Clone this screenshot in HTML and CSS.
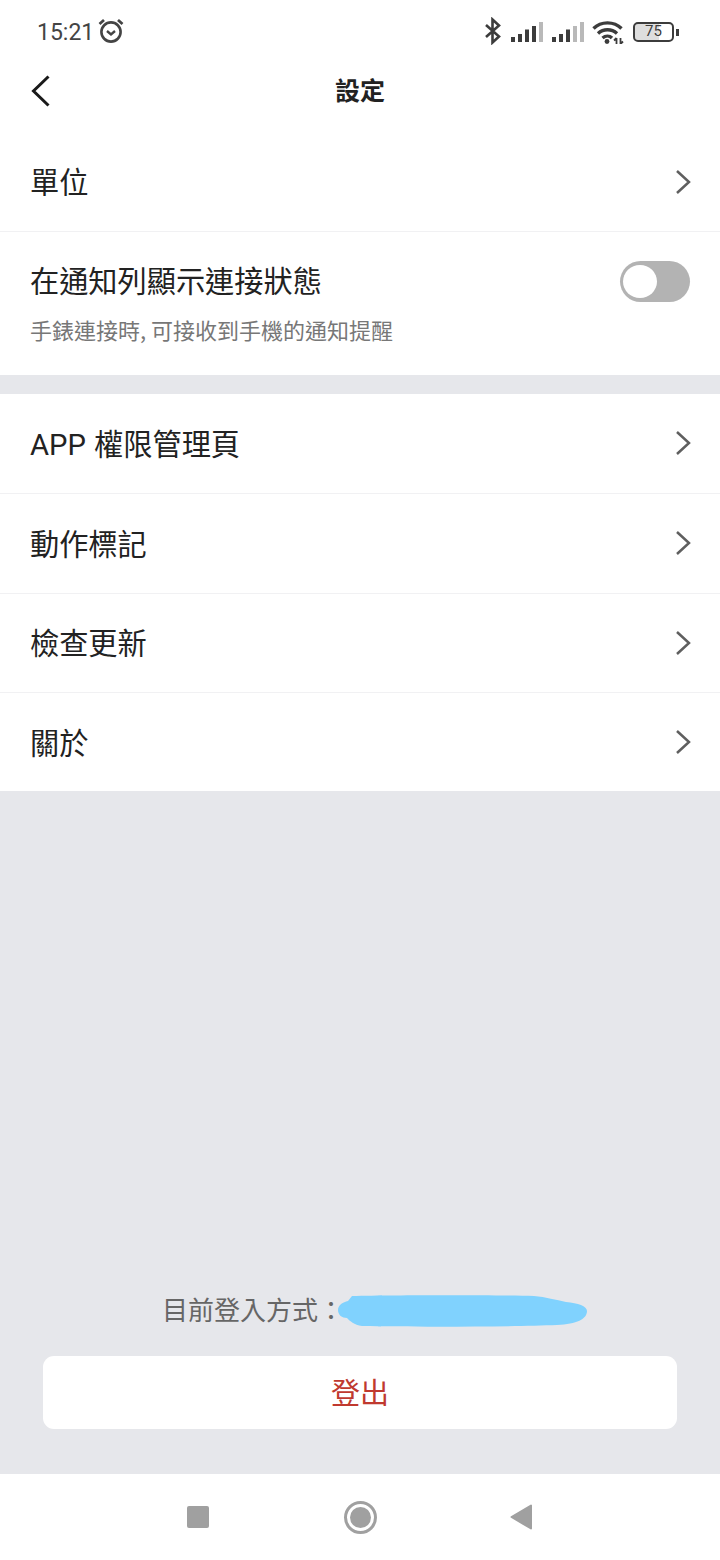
FILE: index.html
```html
<!DOCTYPE html>
<html lang="zh-Hant">
<head>
    <meta charset="UTF-8">
    <meta name="viewport" content="width=device-width, initial-scale=1.0">
    <title>設定</title>
    <link rel="stylesheet" href="styles.css">
</head>
<body>
    <div class="phone">
        <div class="statusbar">
            <div class="status-left">
                <span class="clock">15:21</span>
                <svg class="alarm" width="26" height="26" viewBox="0 0 26 26" fill="none" stroke="#444" stroke-width="2.6">
                    <circle cx="13" cy="14" r="9.600"/>
                    <path d="M9 13l4 3.400 4-3.400" stroke-width="2.400"/>
                    <path d="M1.500 6L6 2M24.500 6L20 2" stroke-width="2.800"/>
                </svg>
            </div>
            <div class="status-right">
                <svg class="bluetooth" width="18" height="28" viewBox="0 0 18 28" fill="none" stroke="#3c3c3c" stroke-width="2.6">
                    <path d="M2 8l13 11.500-6.500 6V2.500L15 8.500 2 20"/>
                </svg>
                <svg class="signal" width="32" height="22" viewBox="0 0 32 22">
                    <rect x="0" y="16" width="4" height="5" fill="#3c3c3c"/>
                    <rect x="7" y="13" width="4" height="8" fill="#3c3c3c"/>
                    <rect x="14" y="8.500" width="4" height="12.500" fill="#3c3c3c"/>
                    <rect x="21" y="5" width="4" height="16" fill="#3c3c3c"/>
                    <rect x="28" y="1" width="4" height="20" fill="#b9b9b9"/>
                </svg>
                <svg class="signal" width="32" height="22" viewBox="0 0 32 22">
                    <rect x="0" y="16" width="4" height="5" fill="#3c3c3c"/>
                    <rect x="7" y="13" width="4" height="8" fill="#3c3c3c"/>
                    <rect x="14" y="8.500" width="4" height="12.500" fill="#3c3c3c"/>
                    <rect x="21" y="5" width="4" height="16" fill="#b9b9b9"/>
                    <rect x="28" y="1" width="4" height="20" fill="#b9b9b9"/>
                </svg>
                <svg class="wifi" width="32" height="24" viewBox="0 0 32 24" fill="none" stroke="#3c3c3c" stroke-width="3.400">
                    <path d="M1.500 8.500C9 1 22 1 29.500 8.500"/>
                    <path d="M6 13.500c5.500-5 13.500-5 19 0"/>
                    <path d="M10.500 18c3-2.500 7-2.500 9.500 0"/>
                    <circle cx="15" cy="21.500" r="2.400" fill="#3c3c3c" stroke="none"/>
                    <path d="M24.500 18v6M22 20.500L24.500 18M28.500 18v6M28.500 24l2.500-2.500" stroke-width="1.800"/>
                </svg>
                <div class="battery">
                    <div class="battery-body">75</div>
                    <div class="battery-tip"></div>
                </div>
            </div>
        </div>

        <div class="titlebar">
            <svg class="back" width="20" height="32" viewBox="0 0 20 32" fill="none" stroke="#1a1a1a" stroke-width="3">
                <path d="M17.500 1.500L2.500 16l15 14.500"/>
            </svg>
            <span class="title">設定</span>
        </div>

        <div class="group first-group">
            <div class="row">
                <span class="row-label">單位</span>
                <svg class="chevron" width="16" height="26" viewBox="0 0 16 26" fill="none" stroke="#5f5f5f" stroke-width="2.500"><path d="M2 2L14 13 2 24"/></svg>
            </div>
            <div class="row row-tall">
                <div>
                    <div class="row-label">在通知列顯示連接狀態</div>
                    <div class="row-sub">手錶連接時, 可接收到手機的通知提醒</div>
                </div>
                <div class="toggle"><div class="knob"></div></div>
            </div>
        </div>

        <div class="group second-group">
            <div class="row">
                <span class="row-label">APP 權限管理頁</span>
                <svg class="chevron" width="16" height="26" viewBox="0 0 16 26" fill="none" stroke="#5f5f5f" stroke-width="2.500"><path d="M2 2L14 13 2 24"/></svg>
            </div>
            <div class="row">
                <span class="row-label">動作標記</span>
                <svg class="chevron" width="16" height="26" viewBox="0 0 16 26" fill="none" stroke="#5f5f5f" stroke-width="2.500"><path d="M2 2L14 13 2 24"/></svg>
            </div>
            <div class="row">
                <span class="row-label">檢查更新</span>
                <svg class="chevron" width="16" height="26" viewBox="0 0 16 26" fill="none" stroke="#5f5f5f" stroke-width="2.500"><path d="M2 2L14 13 2 24"/></svg>
            </div>
            <div class="row">
                <span class="row-label">關於</span>
                <svg class="chevron" width="16" height="26" viewBox="0 0 16 26" fill="none" stroke="#5f5f5f" stroke-width="2.500"><path d="M2 2L14 13 2 24"/></svg>
            </div>
        </div>

        <div class="bottom-area">
            <div class="login-info">
                <span class="login-label">目前登入方式：</span>
                <svg class="blob" width="250" height="32" viewBox="0 0 250 32">
                    <path fill="#80d2fe" d="M14 1C60 0 160 0 196 1c12 1 22 4 32 6 12 1 21 4 21 9 0 8-10 13-30 14-50 2-150 2-195 1-8-1-12-5-15-8C4 23 0 20 0 15 0 10 5 7 10 6z"/>
                </svg>
            </div>
            <button class="logout">登出</button>
        </div>

        <div class="navbar">
            <div class="nav-square"></div>
            <div class="nav-circle"><div class="nav-dot"></div></div>
            <svg class="nav-back" width="22" height="26" viewBox="0 0 22 26"><path fill="#a0a0a0" stroke="#a0a0a0" stroke-width="2" stroke-linejoin="round" d="M21 1.500V24.500L1.500 13z"/></svg>
        </div>
    </div>
</body>
</html>
```

FILE: styles.css
```css
* {
    box-sizing: border-box;
}
body {
    margin: 0;
    background: #e6e7eb;
    font-family: "Noto Sans CJK TC", "Noto Sans", sans-serif;
    color: #222;
}
.phone {
    width: 720px;
    height: 1560px;
    display: flex;
    flex-direction: column;
}
.statusbar {
    height: 60px;
    background: #fff;
    padding: 4px 41px 0 37px;
    display: flex;
    justify-content: space-between;
    align-items: center;
}
.status-left {
    display: flex;
    align-items: center;
    gap: 4px;
}
.clock {
    font-family: Roboto, sans-serif;
    font-size: 23px;
    color: #444;
}
.alarm {
    margin-top: -2px;
}
.status-right {
    display: flex;
    align-items: center;
    gap: 8px;
}
.bluetooth {
    margin-top: -3px;
}
.signal {
    margin-left: 1px;
}
.battery {
    display: flex;
    align-items: center;
    gap: 2px;
    margin-left: 1px;
}
.battery-body {
    width: 41px;
    height: 20px;
    border: 2.5px solid #3c3c3c;
    border-radius: 5px;
    background: linear-gradient(to right, #dedede 65%, transparent 65%);
    background-clip: padding-box;
    font-family: Roboto, sans-serif;
    font-size: 15px;
    line-height: 15px;
    text-align: center;
    color: #3c3c3c;
}
.battery-tip {
    width: 3px;
    height: 7px;
    background: #3c3c3c;
}
.titlebar {
    height: 62px;
    background: #fff;
    display: grid;
    grid-template-columns: 1fr auto 1fr;
    align-items: center;
}
.back {
    margin: 0 0 0 31px;
}
.title {
    font-size: 25px;
    font-weight: 700;
    color: #222;
    margin-bottom: 4px;
}
.first-group {
    padding-top: 10px;
}
.second-group {
    margin-top: 19px;
}
.group {
    background: #fff;
}
.row {
    height: 99.750px;
    padding: 0 30px;
    display: flex;
    align-items: center;
    justify-content: space-between;
    border-bottom: 1px solid #f1f1f3;
}
.group .row:last-child {
    border-bottom: none;
}
.second-group .row:last-child {
    height: 98px;
}
.first-group .row:first-child {
    height: 100px;
}
.row-tall {
    height: 143px;
    padding-top: 26px;
    align-items: flex-start;
}
.row-label {
    font-family: Roboto, "Noto Sans CJK TC", sans-serif;
    font-size: 29.200px;
    line-height: 40px;
    padding-top: 3px;
    word-spacing: 1px;
    color: #222;
}
.row-tall .row-label {
    padding-top: 4px;
}
.row-sub {
    font-size: 22px;
    line-height: 30px;
    margin-top: 12px;
    color: #777;
}
.chevron {
    margin-right: -1px;
}
.toggle {
    width: 70px;
    height: 41px;
    margin-top: 3px;
    border-radius: 21px;
    background: #b3b3b3;
    padding: 4px 3px;
}
.knob {
    width: 34px;
    height: 33px;
    border-radius: 50%;
    background: #fff;
}
.bottom-area {
    flex: 1;
    display: flex;
    flex-direction: column;
    justify-content: flex-end;
    align-items: center;
    padding: 0 43px 45px;
}
.login-info {
    display: flex;
    align-items: center;
    height: 36px;
    margin: 0 0 27px 30px;
    white-space: nowrap;
}
.login-label {
    font-size: 26px;
    padding-bottom: 6px;
    color: #666;
}
.blob {
    margin-left: -6px;
}
.logout {
    width: 100%;
    height: 73px;
    padding: 0 0 3px;
    border: none;
    border-radius: 11px;
    background: #fff;
    color: #c0392f;
    font-family: inherit;
    font-size: 29px;
}
.navbar {
    height: 86px;
    background: #fff;
    display: grid;
    grid-template-columns: 22px 33px 22px;
    column-gap: 135px;
    justify-content: center;
    align-items: center;
}
.nav-square {
    width: 22px;
    height: 22px;
    background: #a0a0a0;
    border-radius: 2px;
}
.nav-circle {
    width: 33px;
    height: 33px;
    border: 3px solid #a0a0a0;
    border-radius: 50%;
    padding: 3px;
}
.nav-dot {
    width: 21px;
    height: 21px;
    background: #a0a0a0;
    border-radius: 50%;
}
.nav-back {
    margin-left: -2px;
}
```
